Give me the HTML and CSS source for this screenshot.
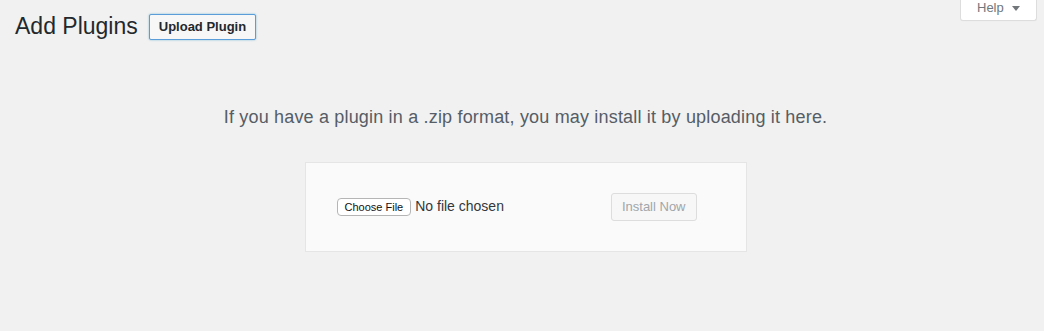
FILE: index.html
```html
<!DOCTYPE html>
<html lang="en">
<head>
    <meta charset="UTF-8">
    <meta name="viewport" content="width=device-width, initial-scale=1.0">
    <title>Add Plugins</title>
    <link rel="stylesheet" href="styles.css">
</head>
<body>
    <div class="wrap">
        <div class="top-bar">
            <div class="heading">
                <h1>Add Plugins</h1>
                <a href="#" class="page-title-action">Upload Plugin</a>
            </div>
            <a href="#" class="help-tab">
                Help
                <svg class="help-arrow" width="8" height="5" viewBox="0 0 8 5"><path d="M0 0h8L4 5z" fill="#72777c"/></svg>
            </a>
        </div>

        <div class="upload-plugin">
            <p class="install-help">If you have a plugin in a .zip format, you may install it by uploading it here.</p>
            <form class="upload-form">
                <input type="file" id="pluginzip" name="pluginzip">
                <button type="submit" class="button install-btn" disabled>Install Now</button>
            </form>
        </div>
    </div>
</body>
</html>
```

FILE: styles.css
```css
body {
    margin: 0;
    background-color: #f1f1f1;
    font-family: "Liberation Sans", Arial, sans-serif;
    color: #444;
}
.wrap {
    padding: 0 8px 0 15px;
}
.top-bar {
    display: flex;
    align-items: flex-start;
}
.heading {
    display: flex;
    align-items: center;
    gap: 11px;
    padding-top: 12px;
}
h1 {
    margin: 0;
    font-size: 23px;
    font-weight: 400;
    line-height: 1.3;
    color: #23282d;
}
.page-title-action {
    display: inline-block;
    height: 26px;
    box-sizing: border-box;
    padding: 0 9px;
    line-height: 24px;
    font-size: 13px;
    font-weight: bold;
    color: #23282d;
    text-decoration: none;
    background-color: #f7f7f7;
    border: 1px solid #5b9dd9;
    border-radius: 2px;
    box-shadow: 0 0 2px rgba(30, 140, 190, 0.6);
}
.help-tab {
    margin-left: auto;
    margin-right: -1px;
    display: flex;
    align-items: center;
    gap: 8px;
    width: 77px;
    height: 21px;
    box-sizing: border-box;
    padding: 0 0 5px 16px;
    line-height: 15px;
    font-size: 13px;
    color: #72777c;
    text-decoration: none;
    background-color: #fff;
    border: 1px solid #ddd;
    border-top: none;
    border-radius: 0 0 3px 3px;
    box-shadow: 0 1px 1px -1px rgba(0, 0, 0, 0.1);
}
.help-arrow {
    margin-top: 1px;
}
.upload-plugin {
    display: flex;
    flex-direction: column;
    align-items: center;
    padding-top: 62px;
}
.install-help {
    margin: 0;
    font-size: 18px;
    letter-spacing: 0.18px;
    line-height: 27px;
    color: #555d66;
}
.upload-form {
    display: flex;
    align-items: center;
    width: 442px;
    height: 90px;
    box-sizing: border-box;
    margin-top: 31px;
    padding: 0 49px 0 31px;
    background-color: #fafafa;
    border: 1px solid #e5e5e5;
}
#pluginzip {
    font-family: "Liberation Sans", Arial, sans-serif;
    font-size: 14px;
    color: #32373c;
    width: 200px;
}
#pluginzip::file-selector-button {
    height: 18px;
    padding: 0 7px;
    margin-right: 4px;
    font-family: "Liberation Sans", Arial, sans-serif;
    font-size: 11px;
    color: #111;
    background-color: #fff;
    border: 1px solid #b5b5b5;
    border-radius: 4px;
}
.install-btn {
    margin-left: auto;
    height: 28px;
    padding: 0 10px;
    font-family: "Liberation Sans", Arial, sans-serif;
    font-size: 13px;
    line-height: 26px;
    color: #a0a5aa;
    background-color: #f7f7f7;
    border: 1px solid #ddd;
    border-radius: 3px;
}
```
